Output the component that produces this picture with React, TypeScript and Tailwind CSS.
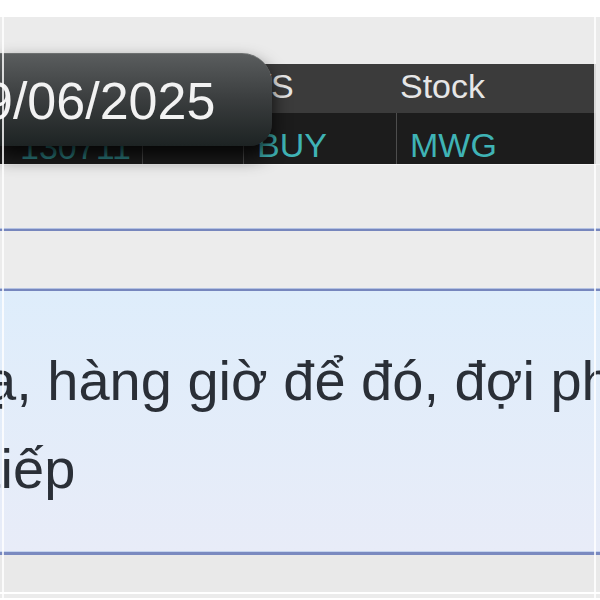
import React from "react";

export default function App() {
  return (
    <div className="relative w-[600px] h-[600px] overflow-hidden bg-white font-['Liberation_Sans',Arial,sans-serif]">
      <div className="h-[17px] bg-white" />
      <div className="relative flex flex-col bg-[#ebebeb]">
        <div className="h-[47px]" />
        {/* table */}
        <div className="relative flex flex-col w-[596px]">
          <div className="flex h-[49px] bg-[#3b3b3b] text-[34px] leading-none text-[#e6e6e6]">
            <div className="w-[142px]" />
            <div className="w-[97px]" />
            <div className="w-[157px] pt-[5px]">B/S</div>
            <div className="flex-1 pt-[5px] pl-[4px]">Stock</div>
          </div>
          <div className="flex h-[51px] bg-[#1c1c1c] text-[34px] leading-none text-[#3fb3b5]">
            <div className="w-[142px] pt-[17px] pl-[20px] text-[#2f8587]">130711</div>
            <div className="w-[101px] border-l border-[#4d4d4d]" />
            <div className="w-[153px] border-l border-[#4d4d4d] pt-[15px] pl-[13px]">BUY</div>
            <div className="flex-1 border-l border-[#4d4d4d] pt-[15px] pl-[13px]">MWG</div>
          </div>
          {/* tooltip */}
          <div className="absolute left-0 top-[-11px] w-[272px] h-[93px] rounded-tr-[30px] rounded-br-[22px] bg-gradient-to-b from-[#5a5d5e] via-[#3a3d3e] to-[#1d2323] shadow-[0_10px_18px_rgba(0,0,0,0.8)] border-t border-[#6d7070]">
            <div className="pt-[21px] ml-[-16px] text-[52px] leading-none text-[#f2f2f2] whitespace-nowrap">
              9/06/2025
            </div>
          </div>
        </div>
        <div className="h-px bg-[#f6f6f6]" />
        <div className="h-[63px]" />
        <div className="h-px bg-[#b4c2e2]" />
        <div className="h-[2px] bg-[#7686bd]" />
        <div className="h-[57px] bg-[#ececec]" />
        <div className="h-px bg-[#b4c2e2]" />
        <div className="h-[2px] bg-[#7686bd]" />
        <div className="h-[260px] bg-gradient-to-b from-[#deedfb] to-[#e8ecf8] overflow-hidden">
          <div className="pt-[46px] ml-[-15px] text-[56px] leading-[88px] text-[#2a2f37] whitespace-nowrap">
            <div>ạ, hàng giờ để đó, đợi phải</div>
            <div>tiếp</div>
          </div>
        </div>
        <div className="h-px bg-[#c3d3ee]" />
        <div className="h-[3px] bg-[#7a8ac0]" />
        <div className="h-[37px] bg-[#e9e9e9]" />
        <div className="h-[2px] bg-white" />
        <div className="h-[4px] bg-[#ebebeb]" />
        <div className="absolute left-[2px] top-0 bottom-0 w-[2px] bg-white/80" />
        <div className="absolute left-[594px] top-0 bottom-0 w-[2px] bg-white/80" />
      </div>
    </div>
  );
}
